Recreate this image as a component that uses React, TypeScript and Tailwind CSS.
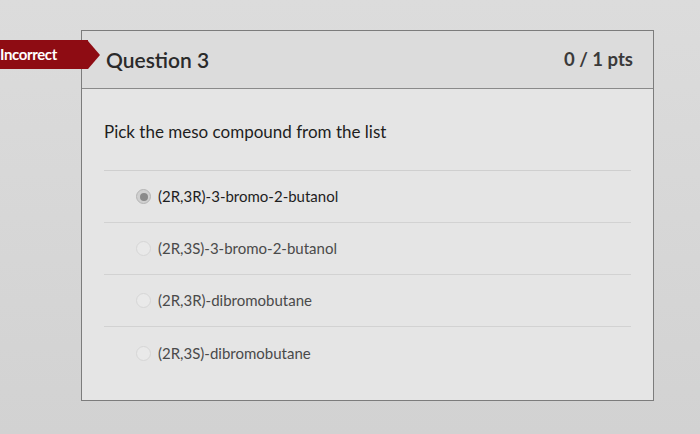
import React from 'react'

const options = [
  { label: '(2R,3R)-3-bromo-2-butanol', selected: true },
  { label: '(2R,3S)-3-bromo-2-butanol', selected: false },
  { label: '(2R,3R)-dibromobutane', selected: false },
  { label: '(2R,3S)-dibromobutane', selected: false },
]

function Radio({ selected }: { selected: boolean }) {
  if (selected) {
    return (
      <span className="flex h-[15px] w-[15px] items-center justify-center rounded-full border border-[#b5b5b5] bg-[#d0d0d0]">
        <span className="h-[8px] w-[8px] rounded-full bg-[#8a8a8a]" />
      </span>
    )
  }
  return <span className="h-[15px] w-[15px] rounded-full border border-[#d6d6d6] bg-[#e9e9e9]" />
}

export default function App() {
  return (
    <div
      className="relative h-[434px] w-[700px] overflow-hidden bg-gradient-to-b from-[#dcdcdc] to-[#d2d2d2] pt-[30px] pl-[81px]"
      style={{ fontFamily: 'Lato, "Open Sans", sans-serif' }}
    >
      {/* Incorrect badge */}
      <div className="absolute left-0 top-[40px] flex h-[29px] items-center">
        <div className="flex h-full w-[88px] items-center bg-[#8e0c13]">
          <span className="text-[15px] font-bold tracking-tight text-white">Incorrect</span>
        </div>
        <div className="h-0 w-0 border-y-[14.5px] border-l-[12px] border-y-transparent border-l-[#8e0c13]" />
      </div>

      <div className="h-[371px] w-[573px] border border-[#7c7c7c] bg-[#e5e5e5]">
        <div className="flex h-[58px] items-center justify-between border-b border-[#8a8a8a] bg-[#dcdcdc] pl-[24px] pr-[20px]">
          <span className="text-[21px] font-semibold text-[#2a2a2a]">Question 3</span>
          <span className="text-[18.5px] font-bold text-[#3a3a3a]">0 / 1 pts</span>
        </div>

        <div className="px-[22px]">
          <div className="flex h-[81px] items-center pt-[4px] text-[17px] text-[#1e1e1e]">
            Pick the meso compound from the list
          </div>
          <div className="border-t border-[#cfcfcf]">
            {options.map((o, i) => (
              <div
                key={o.label}
                className={`flex h-[52px] items-center gap-[7px] pl-[32px] ${i < options.length - 1 ? 'border-b border-[#d2d2d2]' : ''}`}
              >
                <Radio selected={o.selected} />
                <span className={`text-[15px] ${o.selected ? 'text-[#1e1e1e]' : 'text-[#4a4a4a]'}`}>{o.label}</span>
              </div>
            ))}
          </div>
        </div>
      </div>
    </div>
  )
}
